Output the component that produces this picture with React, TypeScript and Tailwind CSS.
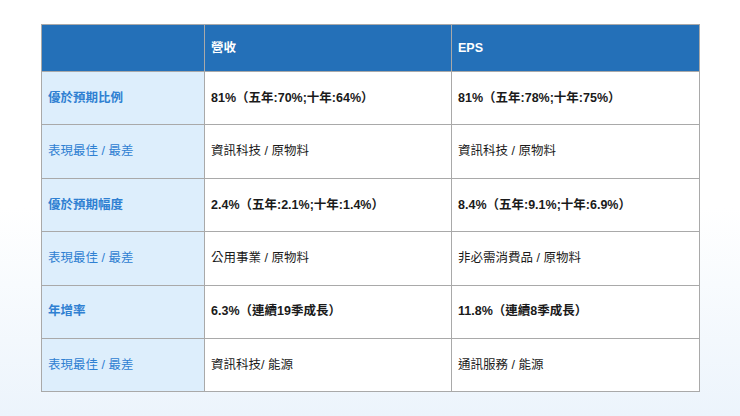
import React from "react";

const rows: { label: string; bold: boolean; a: string; b: string }[] = [
  { label: "優於預期比例", bold: true, a: "81%（五年:70%;十年:64%）", b: "81%（五年:78%;十年:75%）" },
  { label: "表現最佳 / 最差", bold: false, a: "資訊科技 / 原物料", b: "資訊科技 / 原物料" },
  { label: "優於預期幅度", bold: true, a: "2.4%（五年:2.1%;十年:1.4%）", b: "8.4%（五年:9.1%;十年:6.9%）" },
  { label: "表現最佳 / 最差", bold: false, a: "公用事業 / 原物料", b: "非必需消費品 / 原物料" },
  { label: "年增率", bold: true, a: "6.3%（連續19季成長）", b: "11.8%（連續8季成長）" },
  { label: "表現最佳 / 最差", bold: false, a: "資訊科技/ 能源", b: "通訊服務 / 能源" },
];

export default function App() {
  return (
    <div
      className="w-[740px] h-[416px] overflow-hidden bg-[linear-gradient(to_bottom,#ffffff_0%,#ffffff_50%,#ecf4fc_100%)] pt-[24px] pl-[41px]"
      style={{ fontFamily: '"Liberation Sans", "Noto Sans CJK TC", sans-serif' }}
    >
      <div className="w-[659px] border border-[#a9a9a9] grid grid-cols-[163px_247px_247px] text-[12.5px]">
        <div className="h-[46px] bg-[#2470b8] border-r border-[#a9a9a9]" />
        <div className="h-[46px] bg-[#2470b8] border-r border-[#a9a9a9] flex items-center px-[6px] text-white font-bold">營收</div>
        <div className="h-[46px] bg-[#2470b8] flex items-center px-[6px] text-white font-bold">EPS</div>
        {rows.map((r, i) => (
          <React.Fragment key={i}>
            <div className={`h-[53.4px] bg-[#ddeefc] border-t border-r border-[#a9a9a9] flex items-center px-[6px] text-[#2f80d2] ${r.bold ? "font-bold" : ""}`}>
              {r.label}
            </div>
            <div className={`h-[53.4px] bg-white border-t border-r border-[#a9a9a9] flex items-center px-[6px] text-[#1a1a1a] ${r.bold ? "font-bold" : ""}`}>
              {r.a}
            </div>
            <div className={`h-[53.4px] bg-white border-t border-[#a9a9a9] flex items-center px-[6px] text-[#1a1a1a] ${r.bold ? "font-bold" : ""}`}>
              {r.b}
            </div>
          </React.Fragment>
        ))}
      </div>
    </div>
  );
}
